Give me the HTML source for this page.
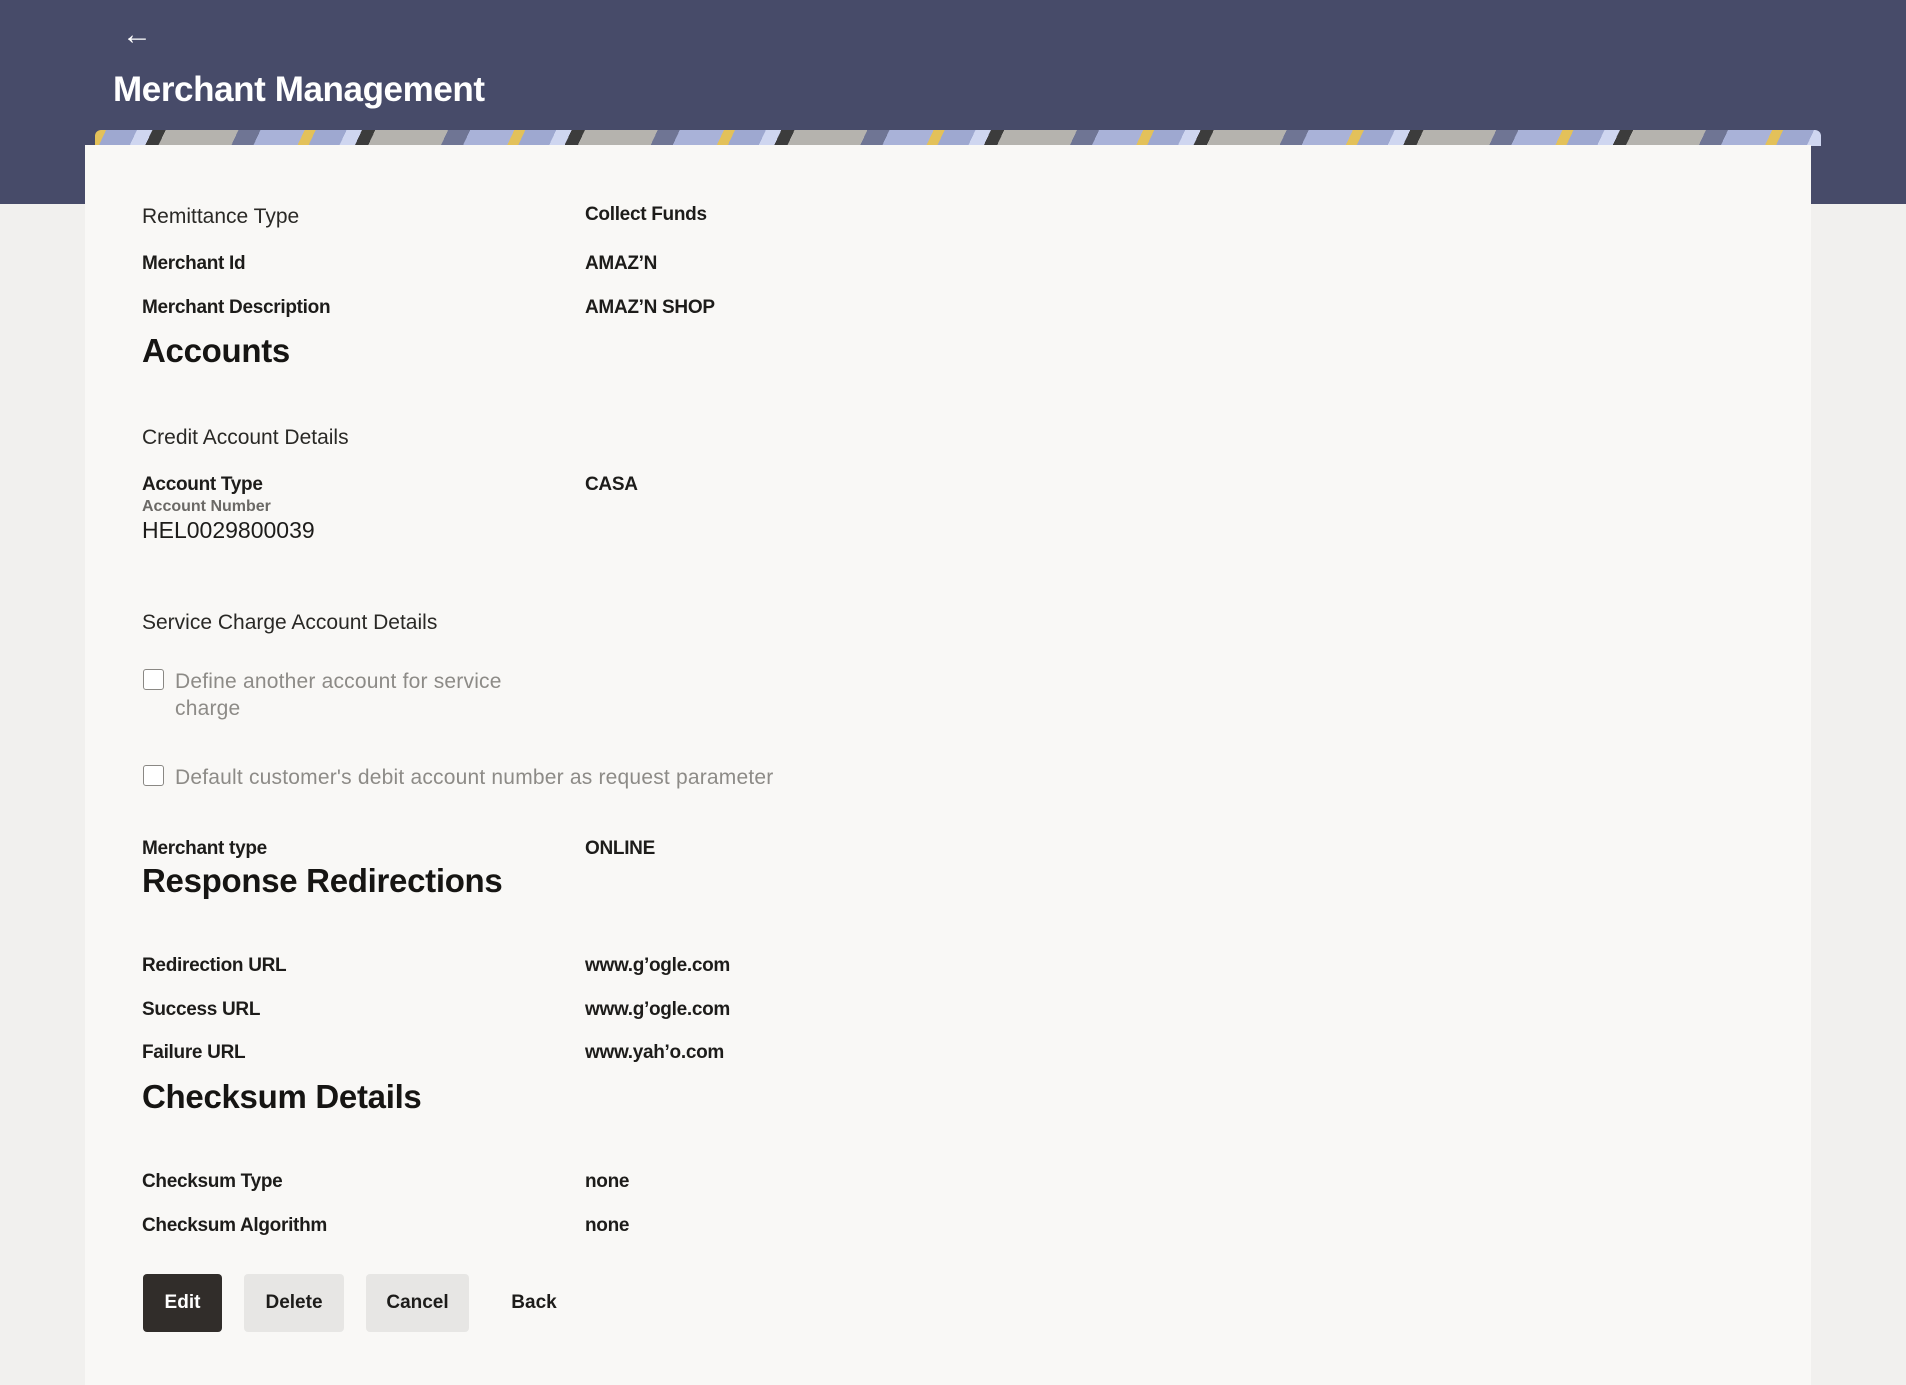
<!DOCTYPE html>
<html><head><meta charset="utf-8"><style>
*{margin:0;padding:0;box-sizing:border-box}
body{width:1906px;height:1376px;overflow:hidden;background:#f1f0ee;font-family:"Liberation Sans",sans-serif;color:#161513;position:relative}
.hdr{position:absolute;left:0;top:0;width:1906px;height:204px;background:#474b69}
.strip{position:absolute;left:95px;top:130px;width:1726px;height:16px;border-radius:6px 6px 0 0;overflow:hidden;
background:repeating-linear-gradient(115deg,#e3c15a 0 10px,#9ea8d0 10px 38px,#cfd6f0 38px 52px,#3c3c3c 52px 64px,#b5b3ae 64px 130px,#6f7594 130px 150px,#a9b2d8 150px 190px)}
.card{position:absolute;left:85px;top:145px;width:1726px;height:1240px;background:#f9f8f6}
.t{position:absolute;white-space:nowrap}
.lab{font-size:19px;font-weight:bold;color:#1d1c1a;letter-spacing:-0.3px}
.val{font-size:19px;font-weight:bold;color:#1d1c1a;letter-spacing:-0.3px}
.h2{font-size:33px;font-weight:bold;letter-spacing:-0.3px}
.sub{font-size:21px;color:#2a2926}
.cb{position:absolute;width:21px;height:21px;border:1.5px solid #8a8884;border-radius:3px;background:#fff}
.ct{font-size:21px;color:#8d8b87;letter-spacing:0.2px}
.btn{position:absolute;top:1274px;height:58px;border-radius:4px;font-size:19px;font-weight:bold;display:flex;align-items:center;justify-content:center}
</style></head><body>
<div class="hdr"></div>
<div class="t" style="left:122px;top:18px;color:#fff;font-size:30px;line-height:34px">&#8592;</div>
<div class="t" style="left:113px;top:70px;color:#fff;font-size:35px;font-weight:bold;letter-spacing:-0.4px;line-height:40px">Merchant Management</div>
<div class="strip"></div>
<div class="card"></div>

<div class="t sub" style="left:142px;top:205px">Remittance Type</div>
<div class="t val" style="left:585px;top:204px">Collect Funds</div>
<div class="t lab" style="left:142px;top:253px">Merchant Id</div>
<div class="t val" style="left:585px;top:253px">AMAZ&#8217;N</div>
<div class="t lab" style="left:142px;top:297px">Merchant Description</div>
<div class="t val" style="left:585px;top:297px">AMAZ&#8217;N SHOP</div>
<div class="t h2" style="left:142px;top:332px">Accounts</div>
<div class="t sub" style="left:142px;top:426px">Credit Account Details</div>
<div class="t lab" style="left:142px;top:474px">Account Type</div>
<div class="t val" style="left:585px;top:474px">CASA</div>
<div class="t" style="left:142px;top:498px;font-size:16px;font-weight:bold;color:#6b6966">Account Number</div>
<div class="t" style="left:142px;top:517px;font-size:23px;color:#1d1c1a">HEL0029800039</div>
<div class="t sub" style="left:142px;top:611px">Service Charge Account Details</div>
<div class="cb" style="left:143px;top:669px"></div>
<div class="t ct" style="left:175px;top:670px">Define another account for service</div>
<div class="t ct" style="left:175px;top:697px">charge</div>
<div class="cb" style="left:143px;top:765px"></div>
<div class="t ct" style="left:175px;top:766px">Default customer's debit account number as request parameter</div>
<div class="t lab" style="left:142px;top:838px">Merchant type</div>
<div class="t val" style="left:585px;top:838px">ONLINE</div>
<div class="t h2" style="left:142px;top:862px">Response Redirections</div>
<div class="t lab" style="left:142px;top:955px">Redirection URL</div>
<div class="t val" style="left:585px;top:955px">www.g&#8217;ogle.com</div>
<div class="t lab" style="left:142px;top:999px">Success URL</div>
<div class="t val" style="left:585px;top:999px">www.g&#8217;ogle.com</div>
<div class="t lab" style="left:142px;top:1042px">Failure URL</div>
<div class="t val" style="left:585px;top:1042px">www.yah&#8217;o.com</div>
<div class="t h2" style="left:142px;top:1078px">Checksum Details</div>
<div class="t lab" style="left:142px;top:1171px">Checksum Type</div>
<div class="t val" style="left:585px;top:1171px">none</div>
<div class="t lab" style="left:142px;top:1215px">Checksum Algorithm</div>
<div class="t val" style="left:585px;top:1215px">none</div>

<div class="btn" style="left:143px;width:79px;background:#312d2a;color:#fff">Edit</div>
<div class="btn" style="left:244px;width:100px;background:#e7e6e4;color:#1d1c1a">Delete</div>
<div class="btn" style="left:366px;width:103px;background:#e7e6e4;color:#1d1c1a">Cancel</div>
<div class="btn" style="left:500px;width:68px;color:#1d1c1a">Back</div>
</body></html>
